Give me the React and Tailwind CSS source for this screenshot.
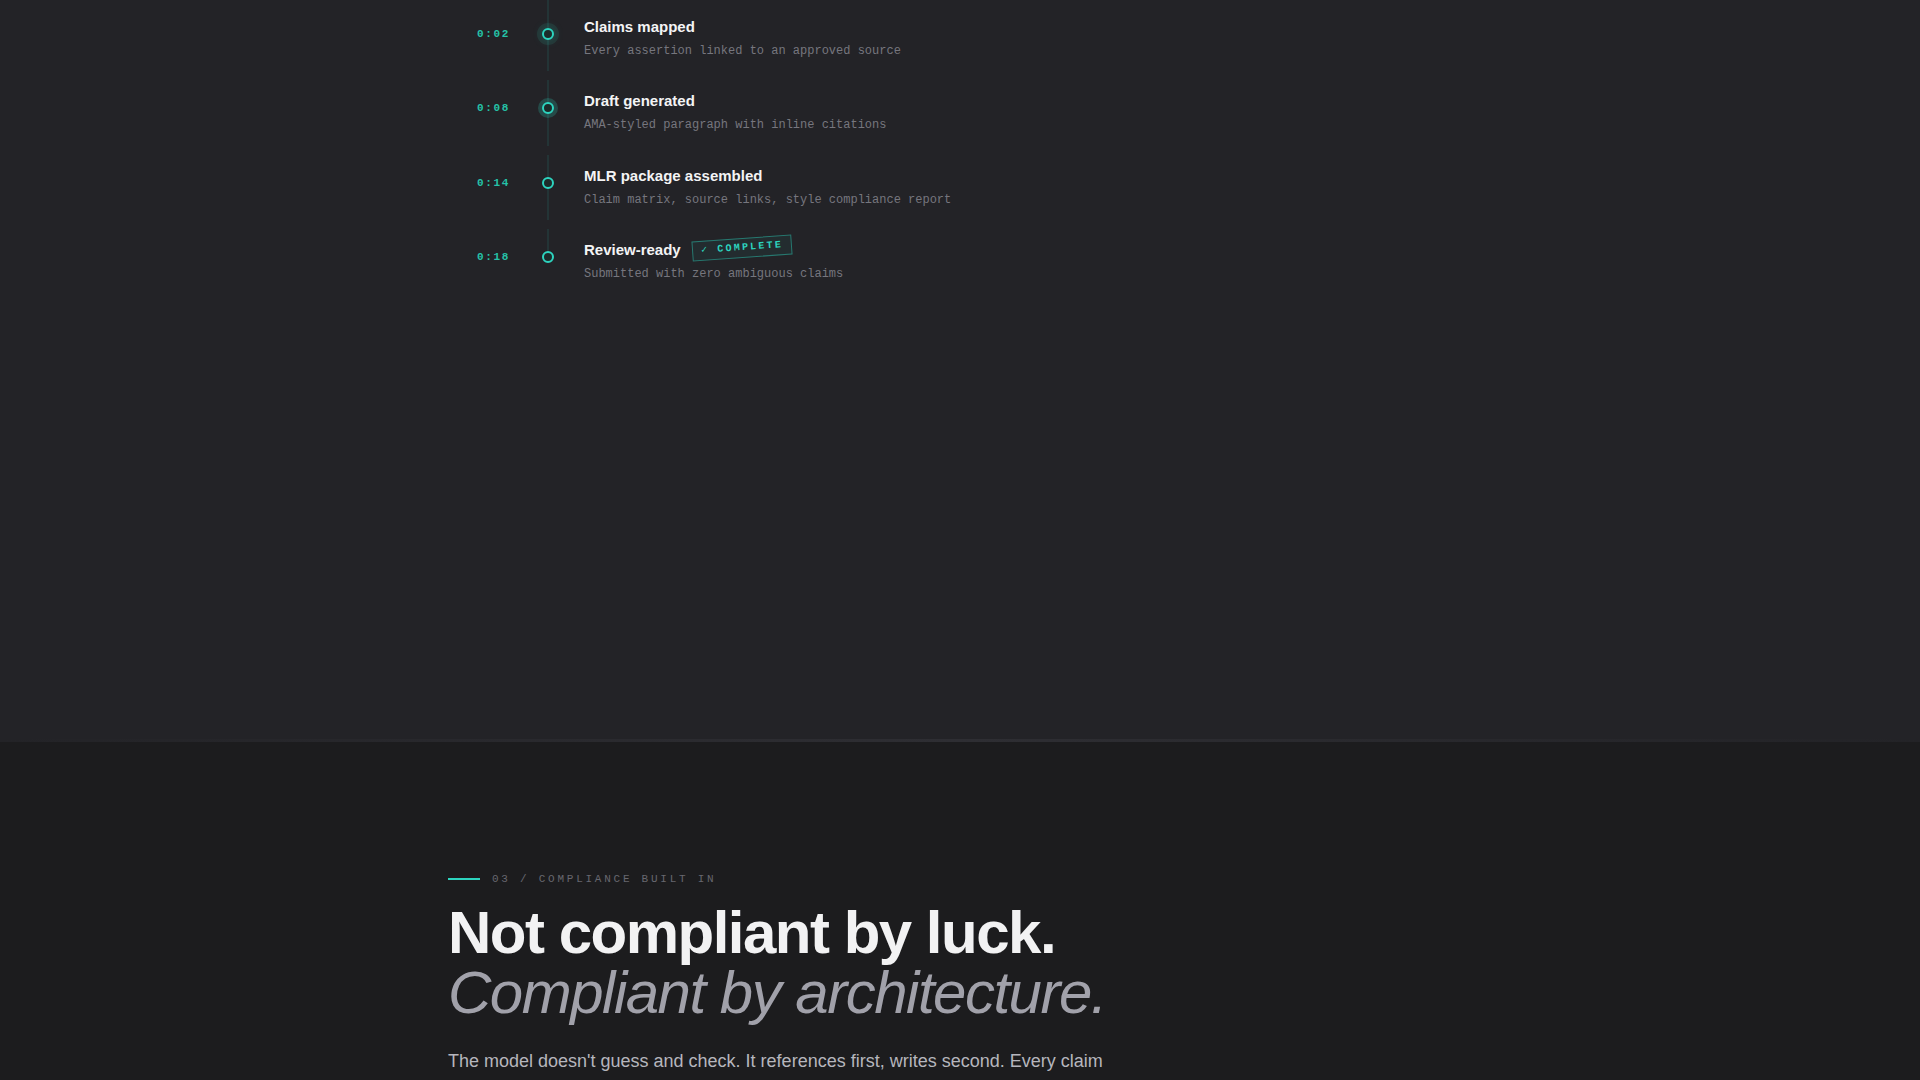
const steps = [
  { t: "0:02", title: "Claims mapped", desc: "Every assertion linked to an approved source", glow: "soft" },
  { t: "0:08", title: "Draft generated", desc: "AMA-styled paragraph with inline citations", glow: "ring" },
  { t: "0:14", title: "MLR package assembled", desc: "Claim matrix, source links, style compliance report" },
  { t: "0:18", title: "Review-ready", desc: "Submitted with zero ambiguous claims", badge: true, last: true },
];

function Dot({ glow }) {
  let halo = "";
  if (glow === "soft") halo = "shadow-[0_0_0_5px_rgba(45,212,191,0.10),0_0_10px_2px_rgba(45,212,191,0.12)]";
  if (glow === "ring") halo = "shadow-[0_0_0_4px_rgba(45,212,191,0.22)]";
  return (
    <span
      className={`relative z-10 block w-3 h-3 rounded-full border-[2.5px] border-[#2dd4bf] bg-[#1d2b2a] ${halo}`}
    />
  );
}

function Step({ step, first }) {
  return (
    <div className="grid grid-cols-[58px_26px_1fr] h-[74.4px]">
      <div className="pt-[26px] font-['Liberation_Mono',monospace] text-[11px] leading-4 font-bold tracking-[0.15em] text-[#25c2a8]">
        {step.t}
      </div>
      <div className="relative flex justify-center">
        <span
          className={`absolute left-1/2 -translate-x-1/2 w-px bg-[#2dd4bf]/20 ${first ? "top-0" : "top-[6px]"} ${
            step.last ? "h-[28px]" : "bottom-[3px]"
          }`}
        />
        <div className="mt-[28px]">
          <Dot glow={step.glow} />
        </div>
      </div>
      <div className="pl-[23px] pt-[17px]">
        <div className="flex items-center">
          <p className="text-[15px] leading-5 font-bold text-[#f4f4f5]">{step.title}</p>
          {step.badge && (
            <span className="ml-[11px] -mt-1 -rotate-[4deg] border border-[#2dd4bf]/45 bg-[#2dd4bf]/5 px-2 py-[3px] font-['Liberation_Mono',monospace] text-[10px] leading-3 font-bold tracking-[0.22em] text-[#2dd4bf]">
              ✓ COMPLETE
            </span>
          )}
        </div>
        <p className="mt-[6px] font-['Liberation_Mono',monospace] text-xs leading-4 text-[#76767e]">{step.desc}</p>
      </div>
    </div>
  );
}

export default function App() {
  return (
    <div className="min-h-screen bg-[#1c1c1e] font-['Liberation_Sans',Arial,sans-serif]">
      <section className="relative h-[742px] bg-[#232327]">
        <div className="max-w-5xl mx-auto pl-[29px]">
          {steps.map((s, i) => (
            <Step key={s.t} step={s} first={i === 0} />
          ))}
        </div>
        <div className="absolute left-0 right-0 bottom-0 h-[3px] bg-gradient-to-r from-transparent via-[#2e2e33] to-transparent" />
      </section>

      <section className="pt-[129px] pb-32">
        <div className="max-w-5xl mx-auto">
          <div className="flex items-center gap-3">
            <span className="block w-8 h-0.5 bg-[#2dd4bf]" />
            <span className="font-['Liberation_Mono',monospace] text-[11px] leading-4 tracking-[0.25em] text-[#67676f]">
              03 / COMPLIANCE BUILT IN
            </span>
          </div>
          <h2 className="mt-4 text-6xl leading-none tracking-tight">
            <span className="block font-bold text-[#f2f2f3]">Not compliant by luck.</span>
            <span className="block italic font-normal text-[#a1a1aa]">Compliant by architecture.</span>
          </h2>
          <p className="mt-6 max-w-[660px] text-lg leading-relaxed text-[#b6b6bd]">
            The model doesn't guess and check. It references first, writes second. Every claim is traced to an
            approved source before a single sentence is drafted, so review starts from certainty.
          </p>
        </div>
      </section>
    </div>
  );
}
